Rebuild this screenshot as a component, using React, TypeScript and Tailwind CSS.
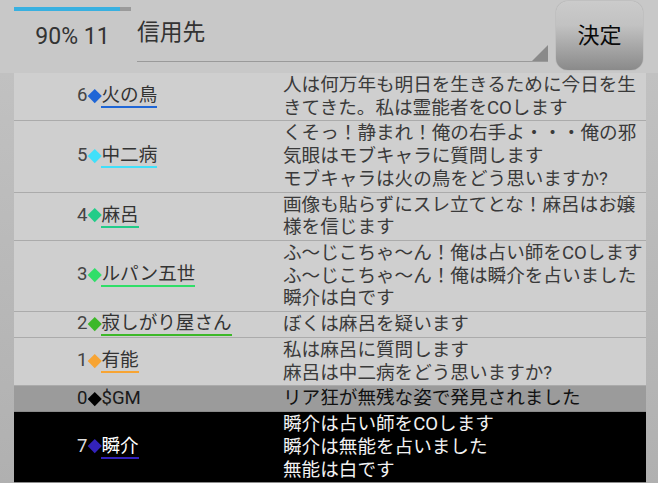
import React from "react";

type Row = {
  num: number;
  color: string;
  name: string;
  lines: string[];
  kind?: "gm" | "dark";
};

const rows: Row[] = [
  { num: 6, color: "#1f66d6", name: "火の鳥", lines: ["人は何万年も明日を生きるために今日を生", "きてきた。私は霊能者をCOします"] },
  { num: 5, color: "#40e0fa", name: "中二病", lines: ["くそっ！静まれ！俺の右手よ・・・俺の邪", "気眼はモブキャラに質問します", "モブキャラは火の鳥をどう思いますか?"] },
  { num: 4, color: "#22cc88", name: "麻呂", lines: ["画像も貼らずにスレ立てとな！麻呂はお嬢", "様を信じます"] },
  { num: 3, color: "#30de68", name: "ルパン五世", lines: ["ふ～じこちゃ～ん！俺は占い師をCOします", "ふ～じこちゃ～ん！俺は瞬介を占いました", "瞬介は白です"] },
  { num: 2, color: "#3cb828", name: "寂しがり屋さん", lines: ["ぼくは麻呂を疑います"] },
  { num: 1, color: "#f7a433", name: "有能", lines: ["私は麻呂に質問します", "麻呂は中二病をどう思いますか?"] },
  { num: 0, color: "#000000", name: "$GM", kind: "gm", lines: ["リア狂が無残な姿で発見されました"] },
  { num: 7, color: "#3322bb", name: "瞬介", kind: "dark", lines: ["瞬介は占い師をCOします", "瞬介は無能を占いました", "無能は白です"] },
];

function RowView({ r }: { r: Row }) {
  const gm = r.kind === "gm";
  const dark = r.kind === "dark";
  const bg = gm ? "bg-[#9b9b9b]" : dark ? "bg-[#000000]" : "bg-[#cfcfcf]";
  const border = gm ? "border-[#8a8a8a]" : dark ? "border-[#8c8c8c]" : "border-[#ababab]";
  const numColor = dark ? "text-[#dddddd]" : gm ? "text-[#1a1a1a]" : "text-[#444444]";
  const nameColor = dark ? "text-[#ffffff]" : gm ? "text-[#1a1a1a]" : "text-[#333333]";
  const msgColor = dark ? "text-[#f2f2f2]" : gm ? "text-[#111111]" : "text-[#3a3a3a]";
  return (
    <div className={`grid grid-cols-[269px_1fr] border-b ${border} ${bg} py-[1px]`}>
      <div className="flex items-center pl-[63px]">
        <div className="flex items-start leading-[21px]">
          <span className={numColor}>{r.num}</span>
          <span className="flex h-[21px] w-[14px] items-center justify-center">
            <span className="h-[9.5px] w-[9.5px] rotate-45" style={{ backgroundColor: r.color }} />
          </span>
          <span
            className={`${nameColor} ${gm ? "" : "border-b-2"}`}
            style={gm ? undefined : { borderColor: r.color }}
          >
            {r.name}
          </span>
        </div>
      </div>
      <div className={`flex flex-col leading-[22.7px] ${msgColor}`}>
        {r.lines.map((l, i) => (
          <div key={i} className="whitespace-nowrap">
            {l}
          </div>
        ))}
      </div>
    </div>
  );
}

export default function App() {
  return (
    <div
      className="h-[483px] w-[658px] overflow-hidden bg-gradient-to-b from-[#c4c4c4] to-[#b0b0b0]"
      style={{ fontFamily: 'Roboto, "Noto Sans CJK JP", sans-serif' }}
    >
      <div className="flex h-[73px] bg-[#c8c8c8] pl-[14px]">
        <div className="flex w-[117px] flex-col">
          <div className="mt-[7px] flex h-[4px]">
            <div className="w-[106px] bg-[#38b0e0]" />
            <div className="flex-1 bg-[#9a9a9a]" />
          </div>
          <div className="mt-[12px] text-center text-[23px] leading-[27px] text-[#333333]">90% 11</div>
        </div>
        <div className="relative ml-[6px] h-[62px] w-[411px] border-b-[1.5px] border-[#9a9a9a]">
          <div className="pt-[18px] text-[22.8px] leading-[30px] text-[#333333]">信用先</div>
          <svg className="absolute bottom-0 right-0" width="16" height="16" viewBox="0 0 16 16">
            <polygon points="16,0 16,16 0,16" fill="#8a8a8a" />
          </svg>
        </div>
        <div className="ml-[8px] mt-[1px] flex h-[69px] w-[87px] items-center justify-center rounded-[12px] bg-[linear-gradient(to_bottom,#cbcbcb_0%,#c2c2c2_35%,#8a8a8a_100%)] shadow-[0_0_1px_rgba(0,0,0,0.35)]">
          <span className="text-[22px] leading-[28px] text-[#0a0a0a]">決定</span>
        </div>
      </div>
      <div className="ml-[14px] w-[632px] text-[18.6px]">
        {rows.map((r) => (
          <RowView key={r.num} r={r} />
        ))}
      </div>
    </div>
  );
}
